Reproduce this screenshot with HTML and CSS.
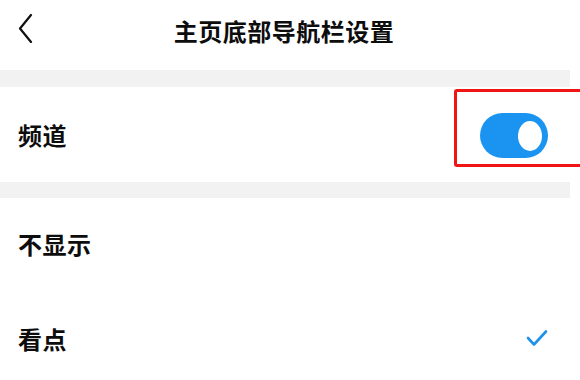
FILE: index.html
```html
<!DOCTYPE html>
<html lang="zh">
<head>
<meta charset="utf-8">
<link rel="stylesheet" href="styles.css">
</head>
<body>
<div class="page">
  <header class="header">
    <svg class="back" width="16" height="30" viewBox="0 0 16 30"><path d="M14 2 L3 15.5 L14 29" fill="none" stroke="#111" stroke-width="2.2" stroke-linecap="round" stroke-linejoin="round"/></svg>
    <h1 class="title">主页底部导航栏设置</h1>
  </header>
  <div class="band band-top"></div>
  <div class="row row-switch">
    <span class="label label-switch">频道</span>
    <span class="toggle"><span class="knob"></span></span>
    <span class="mark"></span>
  </div>
  <div class="band band-mid"></div>
  <div class="row row-option row-a">
    <span class="label">不显示</span>
  </div>
  <div class="row row-option row-b">
    <span class="label">看点</span>
    <svg class="check" width="22" height="18" viewBox="0 0 22 18"><path d="M2 9 L8 15.5 L20 2.5" fill="none" stroke="#1d92ec" stroke-width="2.6" stroke-linecap="round" stroke-linejoin="round"/></svg>
  </div>
</div>
</body>
</html>
```
FILE: styles.css
```css
* { box-sizing: border-box; }
html, body { margin: 0; padding: 0; background: #fff; }
body {
  width: 580px;
  height: 380px;
  overflow: hidden;
  font-family: "Noto Sans CJK SC", "Noto Sans", sans-serif;
  color: #0d0d0d;
}
.page { display: flex; flex-direction: column; }
.header {
  height: 70px;
  display: flex;
  align-items: center;
  justify-content: center;
  position: relative;
}
.back { position: absolute; left: 17px; top: 13px; }
.title {
  margin: -10px 0 0 -12px;
  font-size: 24px;
  font-weight: 700;
  letter-spacing: 0.5px;
}
.band { background: #f2f2f2; margin-right: 10px; }
.band-top { height: 17px; }
.band-mid { height: 16px; }
.row {
  display: flex;
  align-items: center;
  justify-content: space-between;
  padding: 0 32px 0 18px;
  position: relative;
}
.row-switch { height: 95px; }
.row-a { height: 95px; }
.row-b { height: 94px; }
.label {
  font-size: 24px;
  font-weight: 700;
  letter-spacing: 0.5px;
  margin-top: -4px;
}
.label-switch { margin-top: 0; }
.toggle {
  width: 68px;
  height: 45px;
  border-radius: 23px;
  background: #1a94f0;
  display: flex;
  align-items: center;
  justify-content: flex-end;
  padding-right: 6px;
  margin-top: 2px;
}
.knob {
  width: 24px;
  height: 30px;
  border-radius: 50%;
  background: #fff;
}
.mark {
  position: absolute;
  left: 454px;
  top: 2px;
  width: 140px;
  height: 78px;
  border: 3px solid #f01414;
  border-radius: 3px;
}
.check { margin-right: 0; margin-top: -4px; }
```
